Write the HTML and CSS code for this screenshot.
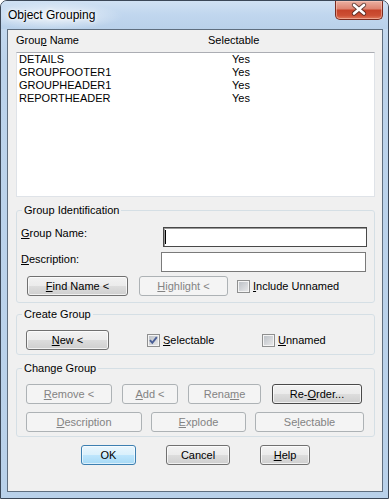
FILE: index.html
```html
<!DOCTYPE html>
<html lang="en">
<head>
  <meta charset="UTF-8">
  <title>Object Grouping</title>
  <meta name="viewport" content="width=device-width, initial-scale=1.0">
  <link rel="stylesheet" href="styles.css">
</head>
<body>
  <div class="window">
    <div class="titlebar">
      <span class="title">Object Grouping</span>
      <span class="close">
        <svg width="46" height="18" viewBox="0 0 46 18">
          <path d="M18 4 L28 12.5 M28 4 L18 12.5" stroke="#3b2420" stroke-width="4.4" stroke-linecap="round" fill="none" opacity="0.75"/>
          <path d="M18 4 L28 12.5 M28 4 L18 12.5" stroke="#fff" stroke-width="2.6" stroke-linecap="round" fill="none"/>
        </svg>
      </span>
    </div>

    <div class="client">
      <div class="list-head">
        <span class="head-name">Grou<u>p</u> Name</span>
        <span>Selectable</span>
      </div>
      <div class="list">
        <div class="row"><span class="row-name">DETAILS</span><span>Yes</span></div>
        <div class="row"><span class="row-name">GROUPFOOTER1</span><span>Yes</span></div>
        <div class="row"><span class="row-name">GROUPHEADER1</span><span>Yes</span></div>
        <div class="row"><span class="row-name">REPORTHEADER</span><span>Yes</span></div>
      </div>

      <fieldset class="group group-ident">
        <legend>Group Identification</legend>
        <div class="field">
          <label class="field-label"><u>G</u>roup Name:</label>
          <div class="textbox focused"><span class="caret"></span></div>
        </div>
        <div class="field field-desc">
          <label class="field-label"><u>D</u>escription:</label>
          <div class="textbox textbox-desc"></div>
        </div>
        <div class="btn-row">
          <span class="btn w-find"><u>F</u>ind Name &lt;</span>
          <span class="btn disabled w-highlight"><u>H</u>ighlight &lt;</span>
          <span class="check check-include"><span class="box"></span><span><u>I</u>nclude Unnamed</span></span>
        </div>
      </fieldset>

      <fieldset class="group group-create">
        <legend>Create Group</legend>
        <div class="btn-row">
          <span class="btn w-new"><u>N</u>ew &lt;</span>
          <span class="check check-selectable">
            <span class="box">
              <svg width="11" height="11" viewBox="0 0 11 11"><path d="M2 5.2 L4.3 7.8 L8.8 2.2" stroke="#4a5f97" stroke-width="1.9" fill="none"/></svg>
            </span>
            <span><u>S</u>electable</span>
          </span>
          <span class="check"><span class="box"></span><span><u>U</u>nnamed</span></span>
        </div>
      </fieldset>

      <fieldset class="group group-change">
        <legend>Change Group</legend>
        <div class="btn-row">
          <span class="btn disabled w-remove"><u>R</u>emove &lt;</span>
          <span class="btn disabled w-add"><u>A</u>dd &lt;</span>
          <span class="btn disabled w-rename">Rena<u>m</u>e</span>
          <span class="btn strong w-reorder">Re-<u>O</u>rder...</span>
        </div>
        <div class="btn-row second">
          <span class="btn disabled w-desc"><u>D</u>escription</span>
          <span class="btn disabled w-explode"><u>E</u>xplode</span>
          <span class="btn disabled w-selectable">Se<u>l</u>ectable</span>
        </div>
      </fieldset>

      <div class="dialog-buttons">
        <span class="btn default w-ok">OK</span>
        <span class="btn w-cancel">Cancel</span>
        <span class="btn w-help"><u>H</u>elp</span>
      </div>
    </div>
  </div>
</body>
</html>
```

FILE: styles.css
```css
body {
  margin: 0;
  background: #fff;
  font-family: "Liberation Sans", Arial, sans-serif;
  font-size: 11px;
  line-height: 13px;
  color: #000;
}

.window {
  width: 389px;
  height: 499px;
  box-sizing: border-box;
  border: 1px solid #3b4757;
  border-radius: 7px 7px 0 0;
  background: linear-gradient(#c9dcf1, #bcd3eb 60px, #b9d1ea);
  display: flex;
  flex-direction: column;
  overflow: hidden;
}

.titlebar {
  height: 28px;
  flex: none;
  display: flex;
  justify-content: space-between;
  align-items: flex-start;
  background:
    radial-gradient(ellipse 70px 14px at 52px 15px, rgba(255, 255, 255, 0.75), rgba(255, 255, 255, 0)),
    linear-gradient(#d0e1f3, #c0d6ee 50%, #b9d1ea);
}

.title {
  margin: 6px 0 0 7px;
  font-size: 12px;
  line-height: 16px;
  text-shadow: 0 0 6px #fff, 0 0 3px #fff;
}

.close {
  width: 48px;
  height: 19px;
  box-sizing: border-box;
  margin-right: 5px;
  border: 1px solid #7a2b1f;
  border-top: none;
  border-radius: 0 0 5px 5px;
  background: linear-gradient(#eab0a2 0%, #dd8572 42%, #c6432a 52%, #cc4f34 80%, #e07a5d 100%);
  box-shadow: inset 0 0 0 1px rgba(255, 210, 195, 0.5);
}

.close svg {
  display: block;
}

.client {
  flex: 1;
  margin: 0 5px 6px 6px;
  border: 1px solid #5f6e7f;
  background: #f0f0f0;
  padding: 4px 7px 0 8px;
}

.list-head {
  display: flex;
  height: 13px;
}

.head-name {
  width: 192px;
}

.list {
  margin-top: 5px;
  height: 145px;
  box-sizing: border-box;
  background: #fff;
  border: 1px solid #dfe3e8;
  border-top-color: #abadb3;
  padding-left: 2px;
}

.row {
  display: flex;
  height: 13px;
}

.row-name {
  width: 213px;
}

.group {
  margin: 7px 0 0;
  padding: 10px 4px 6px;
  border: 1px solid #d5dfe5;
  border-radius: 3px;
  min-width: 0;
}

.group legend {
  padding: 0 2px;
  margin-left: 1px;
}

.group-create {
  margin-top: 5px;
  padding: 9px 4px 4px;
}

.group-change {
  padding: 9px 4px 4px;
}

.field {
  display: flex;
  align-items: flex-start;
}

.field-label {
  width: 142px;
}

.field-desc {
  margin-top: 5px;
}

.field-desc .field-label {
  padding-top: 1px;
}

.textbox {
  width: 204px;
  height: 20px;
  box-sizing: border-box;
  background: #fff;
  border: 1px solid #7a7a7a;
}

.textbox.focused {
  border-color: #484848;
  box-shadow: inset 1px 1px 0 #9a9a9a;
  padding: 2px 0 0 1px;
}

.textbox-desc {
  width: 205px;
  margin-left: -2px;
}

.caret {
  display: block;
  width: 1px;
  height: 14px;
  background: #000;
}

.btn-row {
  display: flex;
  align-items: center;
  margin-top: 4px;
}

.group-create .btn-row,
.group-change .btn-row {
  margin-top: 0;
}

.group-change .btn-row.second {
  margin-top: 8px;
}

.btn {
  display: block;
  height: 20px;
  box-sizing: border-box;
  border: 1px solid #707070;
  border-radius: 3px;
  background: linear-gradient(#f2f2f2 0%, #ebebeb 50%, #dddddd 50%, #cfcfcf 100%);
  box-shadow: inset 0 0 0 1px rgba(255, 255, 255, 0.7);
  text-align: center;
  line-height: 18px;
  white-space: nowrap;
}

.btn.disabled {
  border-color: #adb2b5;
  background: #f4f4f4;
  box-shadow: none;
  color: #838383;
}

.btn.strong {
  border-color: #4a4a4a;
}

.btn.default {
  border-color: #3c7fb1;
  background: linear-gradient(#eaf6fd 0%, #d9f0fc 50%, #bee6fd 50%, #a7d9f5 100%);
  box-shadow: inset 0 0 0 1px rgba(255, 255, 255, 0.6);
}

.check {
  display: flex;
  align-items: center;
  gap: 3px;
}

.box {
  width: 13px;
  height: 13px;
  box-sizing: border-box;
  border: 1px solid #8e8f8f;
  background: linear-gradient(135deg, #b9bec4, #ebebec);
  box-shadow: inset 0 0 0 1px #f4f4f4;
}

.box svg {
  display: block;
}

.w-find { width: 101px; margin-left: 6px; }
.w-highlight { width: 89px; margin-left: 11px; }
.check-include { margin-left: 9px; }

.w-new { width: 83px; margin-left: 5px; }
.check-selectable { width: 115px; margin-left: 38px; }

.w-remove { width: 86px; margin-left: 5px; }
.w-add { width: 56px; margin-left: 10px; }
.w-rename { width: 73px; margin-left: 10px; }
.w-reorder { width: 90px; margin-left: 11px; }
.w-desc { width: 116px; margin-left: 5px; }
.w-explode { width: 95px; margin-left: 9px; }
.w-selectable { width: 109px; margin-left: 9px; }

.dialog-buttons {
  display: flex;
  margin-top: 8px;
}

.w-ok { width: 55px; margin-left: 65px; }
.w-cancel { width: 64px; margin-left: 30px; }
.w-help { width: 50px; margin-left: 30px; }
```
